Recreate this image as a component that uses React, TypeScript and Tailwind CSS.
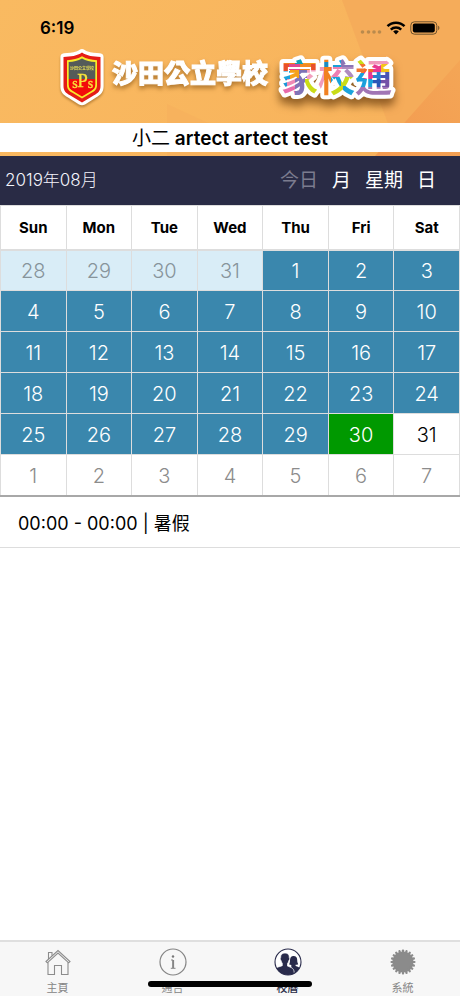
import type { ReactNode } from 'react';
import { clsx } from 'clsx';

type DayKind = 'holiday' | 'outsideHoliday' | 'outside' | 'selected' | 'plain';

const WEEKDAYS = ['Sun', 'Mon', 'Tue', 'Wed', 'Thu', 'Fri', 'Sat'];

const DAY_STYLES: Record<DayKind, string> = {
  holiday: 'bg-[#3a87ad] text-white',
  outsideHoliday: 'bg-[#d9edf7] text-[#87949b]',
  outside: 'bg-white text-[#8c8c8c]',
  selected: 'bg-[#009900] text-white',
  plain: 'bg-white text-black',
};

// August 2019 starts on a Thursday, so the grid opens with 28 July.
const DAYS = Array.from({ length: 42 }, (_, i) => {
  const date = new Date(2019, 6, 28 + i);
  const day = date.getDate();
  let kind: DayKind = 'holiday';
  if (date.getMonth() === 6) kind = 'outsideHoliday';
  else if (date.getMonth() === 8) kind = 'outside';
  else if (day === 30) kind = 'selected';
  else if (day === 31) kind = 'plain';
  return { day, kind };
});

const WEEKS = Array.from({ length: 6 }, (_, i) => DAYS.slice(i * 7, i * 7 + 7));

const VIEWS = ['今日', '月', '星期', '日'];

function StatusBar() {
  return (
    <div className="relative flex items-center justify-between pt-4 pr-5 pl-10">
      <span className="text-[17px] leading-6 font-semibold">6:19</span>
      <div className="flex items-center gap-1">
        <svg width="22" height="14" viewBox="0 0 22 14" aria-hidden>
          {[2.5, 8.5, 14, 19.5].map((cx) => (
            <circle key={cx} cx={cx} cy="11" r="1.8" fill="#b98a4d" />
          ))}
        </svg>
        <svg width="20" height="14" viewBox="0 0 20 14" fill="none" stroke="#000" strokeWidth="2.5" aria-hidden>
          <path d="M1.5 5.2a12 12 0 0 1 17 0" />
          <path d="M4.800 8.600a7.400 7.400 0 0 1 10.400 0" />
          <path d="M10 13.400 7.200 10.500a4.200 4.200 0 0 1 5.600 0z" fill="#000" stroke="none" />
        </svg>
        <svg width="30" height="14" viewBox="0 0 30 14" aria-hidden>
          <rect x=".8" y=".8" width="26" height="12.4" rx="3.6" fill="none" stroke="#6c512c" />
          <rect x="2.8" y="2.6" width="22" height="8.8" rx="1.8" />
          <path d="M28.200 4.800v4.400c1.600-.6 1.600-3.800 0-4.400z" fill="#6c512c" />
        </svg>
      </div>
    </div>
  );
}

function SchoolCrest() {
  return (
    <svg
      width="44"
      height="58"
      viewBox="0 0 44 58"
      className="shrink-0 drop-shadow-[0_2px_1px_rgba(120,70,10,0.45)]"
      role="img"
      aria-label="SPS"
    >
      <path d="M22 1c2 0 2.600 1.500 5 2.200 4.500 1.600 9 1.400 13 2.100 2.600.4 3.600 1.700 3.600 4.200V38c0 6-2.600 8.600-7.600 11.500L25 56.500c-2 1.100-4 1.100-6 0L8 49.500C3 46.600.4 44 .4 38V9.500C.4 7 1.400 5.700 4 5.300c4-.7 8.500-.5 13-2.100C19.400 2.500 20 1 22 1z" fill="#fff" />
      <path d="M22 4.500c5 3.500 11 4 18.500 4.500v29c0 5-2.500 7-6.500 9.300L22 54.500l-12-7.200C6 45 3.500 43 3.500 38V9C11 8.500 17 8 22 4.500z" fill="#e51c17" />
      <path d="M22 8.300c4.500 2.700 9 3.500 15 4V37c0 4-1.800 5.700-5 7.600L22 50.500l-10-5.900c-3.200-1.900-5-3.600-5-7.600V12.300c6-.5 10.500-1.300 15-4z" fill="#f8ea2a" />
      <path d="M22 10.500c4 2.300 8.300 3.200 13.300 3.600V31H8.700V14.100c5-.4 9.300-1.300 13.300-3.600z" fill="#555b59" />
      <path d="M8.700 31h26.600v5.700c0 3.400-1.600 4.700-4.200 6.300L22 48.500 12.900 43c-2.600-1.600-4.200-2.900-4.200-6.300z" fill="#f30b0b" />
      <text x="22" y="21.5" textAnchor="middle" fontSize="4" fontWeight="700" fill="#e8dd55" className="font-['Noto_Sans_CJK_TC',sans-serif]">
        沙田公立學校
      </text>
      <g fill="#f9e43b" stroke="#f9e43b" strokeWidth=".3" className="font-['Liberation_Serif',serif]">
        <text x="15" y="40" fontSize="14" textAnchor="middle">s</text>
        <text x="22.500" y="39" fontSize="19" textAnchor="middle">P</text>
        <text x="30.500" y="40" fontSize="14" textAnchor="middle">s</text>
      </g>
    </svg>
  );
}

// x, y, width, height, colour of each patch behind the wordmark's letters
const PATCHES: [number, number, number, number, string][] = [
  [3, 9, 14, 7, '#f47b20'],
  [17, 6, 8, 10, '#12a0b4'],
  [25, 9, 15, 7, '#f59a1f'],
  [3, 16, 8, 7, '#e9502a'],
  [11, 16, 11, 6, '#e0498f'],
  [22, 16, 11, 6, '#f18a22'],
  [33, 16, 7, 7, '#e9502a'],
  [3, 23, 9, 8, '#1ba3dc'],
  [12, 22, 9, 9, '#f5a21b'],
  [21, 22, 8, 8, '#7c72b6'],
  [29, 22, 11, 9, '#f3a0bf'],
  [3, 31, 6, 8, '#1b96d8'],
  [9, 31, 8, 8, '#ef8ab5'],
  [17, 30, 10, 18, '#8174b7'],
  [27, 31, 13, 17, '#cbdc17'],
  [3, 39, 14, 9, '#e86bab'],
  [40, 6, 6, 42, '#f09abb'],
  [46, 6, 7, 42, '#f18122'],
  [40, 14, 13, 5, '#1c8cc4'],
  [53, 6, 10, 13, '#1aa0d8'],
  [63, 6, 14, 13, '#8b75b5'],
  [53, 19, 11, 10, '#ee7fb2'],
  [64, 19, 13, 10, '#b08cc0'],
  [53, 29, 10, 9, '#1aa0d8'],
  [63, 29, 14, 9, '#c9dc18'],
  [53, 38, 12, 10, '#c9dc18'],
  [65, 38, 12, 10, '#1ba3dc'],
  [77, 6, 9, 10, '#c9dc18'],
  [77, 16, 9, 9, '#f3762c'],
  [77, 25, 9, 14, '#1b9edc'],
  [77, 39, 37, 9, '#a176b5'],
  [86, 6, 28, 10, '#f09abb'],
  [86, 16, 9, 8, '#f3692a'],
  [95, 16, 8, 8, '#e83991'],
  [103, 16, 11, 8, '#f5c21b'],
  [86, 24, 9, 7, '#e83991'],
  [95, 24, 8, 7, '#2a7fd0'],
  [103, 24, 11, 7, '#4b55b5'],
  [86, 31, 9, 8, '#1ba3dc'],
  [95, 31, 8, 8, '#2a57b8'],
  [103, 31, 11, 8, '#7452a8'],
];

function AppWordmark() {
  return (
    <svg
      width="118"
      height="60"
      viewBox="0 0 118 60"
      className="shrink-0 drop-shadow-[0_7px_4px_rgba(80,40,0,0.6)]"
    >
      <defs>
        <pattern id="patchwork" width="118" height="60" patternUnits="userSpaceOnUse">
          {PATCHES.map(([x, y, w, h, fill]) => (
            <rect key={`${x}-${y}`} x={x} y={y} width={w} height={h} fill={fill} />
          ))}
        </pattern>
      </defs>
      <text
        x="3"
        y="44"
        fontSize="37"
        fontWeight="700"
        fill="url(#patchwork)"
        stroke="#fff"
        strokeWidth="8"
        strokeLinejoin="round"
        className="font-['Noto_Sans_CJK_TC',sans-serif] [paint-order:stroke]"
      >
        家校通
      </text>
    </svg>
  );
}

function Banner() {
  return (
    <header className="relative overflow-hidden bg-[#f9b95f]">
      <svg
        className="absolute inset-0 h-full w-full"
        viewBox="0 0 460 156"
        preserveAspectRatio="none"
        aria-hidden
      >
        <defs>
          <linearGradient id="glow" x1="0" y1="0" x2="1" y2="0.3">
            <stop offset="0" stopColor="#f9ba61" />
            <stop offset="1" stopColor="#f8b35c" />
          </linearGradient>
          <linearGradient id="corner" x1="0" y1="1" x2="1" y2="0">
            <stop offset="0" stopColor="#f39a50" />
            <stop offset="1" stopColor="#f4a656" />
          </linearGradient>
        </defs>
        <rect width="460" height="156" fill="url(#glow)" />
        <path d="M167 156V104L280 156z" fill="#f7b25d" />
        <path d="M342 0H460V156H400z" fill="#f5ac5a" />
        <path d="M460 60V156H375z" fill="url(#corner)" />
      </svg>
      <StatusBar />
      <div className="relative flex h-[83px] items-start justify-center pt-2 pr-1">
        <SchoolCrest />
        <h1 className="mt-2 ml-2 text-[26px] leading-9 font-black whitespace-nowrap text-white drop-shadow-[0_3px_2px_rgba(110,60,0,0.5)] [-webkit-text-stroke:1px_white]">
          沙田公立學校
        </h1>
        <div className="ml-2.5">
          <AppWordmark />
        </div>
      </div>
      <div className="relative mb-1 bg-white pt-0.5 text-center text-[19px] leading-[27px] font-semibold">
        <span className="font-normal">小二</span> artect artect test
      </div>
    </header>
  );
}

function Calendar() {
  return (
    <section>
      <div className="flex h-[49px] items-center justify-between bg-[#292b45] pr-6 pl-[5px] text-white">
        <h2 className="text-[17px] font-light text-[#f4f4fc]">2019年08月</h2>
        <div className="flex gap-3.5 pt-0.5 text-[19px]">
          {VIEWS.map((view, i) => (
            <button key={view} type="button" className={clsx(i === 0 && 'text-[#7b7c8f]')}>
              {view}
            </button>
          ))}
        </div>
      </div>
      <table className="w-full table-fixed border-collapse">
        <thead>
          <tr className="h-11">
            {WEEKDAYS.map((name) => (
              <th key={name} scope="col" className="border border-b-2 border-[#dddddd] p-0 pt-0.5 text-[15px] font-bold">
                {name}
              </th>
            ))}
          </tr>
        </thead>
        <tbody>
          {WEEKS.map((week, w) => (
            <tr key={w} className="h-[41px]">
              {week.map(({ day, kind }) => (
                <td
                  key={day}
                  className={clsx(
                    'border border-t-[#dddddd] border-r-[#dddddd] border-l-[#dddddd] p-0',
                    w < 5 ? 'border-b-[#dddddd]' : 'border-b-2 border-b-[#a8a8a8]',
                    DAY_STYLES[kind],
                  )}
                >
                  <button type="button" className="block w-full pt-0.5 text-center text-[20px] leading-8 font-light">
                    {day}
                  </button>
                </td>
              ))}
            </tr>
          ))}
        </tbody>
      </table>
    </section>
  );
}

function HomeIcon() {
  return (
    <svg width="28" height="28" viewBox="0 0 28 28" fill="none" stroke="#8c8c8c" strokeWidth="1.1" aria-hidden>
      <path d="M2 13.500 14 2.500l12 11-1.300 1.300L14 5 3.300 14.800z" />
      <path d="M4 14.200V26.500h6.500v-9h7v9H24V14.200" />
      <path d="M4.500 11V4.500h3.500v3.300" />
    </svg>
  );
}

function InfoIcon() {
  return (
    <svg width="28" height="28" viewBox="0 0 28 28" fill="none" stroke="#858585" strokeWidth="1.2" aria-hidden>
      <circle cx="14" cy="14" r="13" />
      <circle cx="14" cy="8.5" r="1.2" fill="#777" stroke="none" />
      <path d="M12 12h2v8M11.800 20.300h4.700" strokeWidth="1" />
      <path d="M14.200 12v8" strokeWidth="1.8" />
    </svg>
  );
}

function PeopleIcon() {
  return (
    <svg width="28" height="28" viewBox="0 0 28 28" aria-hidden>
      <defs>
        <clipPath id="people-circle">
          <circle cx="14" cy="14" r="13" />
        </clipPath>
      </defs>
      <circle cx="14" cy="14" r="13" fill="#fff" />
      <g clipPath="url(#people-circle)" fill="#292b4b">
        <path d="M19.500 8c2.600 0 3.800 1.700 3.700 4.200 0 1.900.5 2.700 1 4-1 .6-1.800.7-2.600.6v1.300c2.400.8 4.600 1.600 5.700 3.200V28h-10V17c-.9 0-1.500-.2-2.300-.7.9-1.300.9-2.200 1-4.100C16 9.700 17 8 19.500 8z" />
        <path d="M11 5c3 0 4.500 1.900 4.300 4.800.6.400.4 2-.4 2.700-.2 1.300-.8 2.200-1.400 2.900v2.700c3.600 1.400 6.400 1.700 6.700 6.300L20 28H0v-7c2-1.600 5-2.100 8.300-3.300v-2.400c-.6-.7-1.100-1.600-1.300-2.800-.8-.6-1-2.300-.4-2.700C6.400 6.900 8 5 11 5z" stroke="#fff" strokeWidth=".7" />
      </g>
      <circle cx="14" cy="14" r="13" fill="none" stroke="#292b4b" strokeWidth="1.1" />
    </svg>
  );
}

function GearIcon() {
  return (
    <svg width="28" height="28" viewBox="0 0 28 28" fill="#8b8b8b" aria-hidden>
      <circle cx="14" cy="14" r="10.6" />
      {Array.from({ length: 20 }, (_, i) => (
        <rect
          key={i}
          x="12.9"
          y="1.5"
          width="2.2"
          height="4"
          rx=".8"
          transform={`rotate(${i * 18} 14 14)`}
        />
      ))}
    </svg>
  );
}

const TABS: { label: string; icon: ReactNode; active?: boolean }[] = [
  { label: '主頁', icon: <HomeIcon /> },
  { label: '通告', icon: <InfoIcon /> },
  { label: '校曆', icon: <PeopleIcon />, active: true },
  { label: '系統', icon: <GearIcon /> },
];

function TabBar() {
  return (
    <nav className="relative grid grid-cols-4 border-t-2 border-[#dfdfdf] bg-[#f7f7f7]">
      {TABS.map(({ label, icon, active }) => (
        <a
          key={label}
          href="#"
          aria-current={active ? 'page' : undefined}
          className={clsx(
            'flex flex-col items-center gap-1 pt-1.5 text-[11px] leading-4',
            active ? 'font-medium text-[#292b45]' : 'text-[#858585]',
          )}
        >
          {icon}
          {label}
        </a>
      ))}
      {/* home indicator */}
      <div className="pointer-events-none absolute bottom-[9px] left-1/2 h-[6px] w-[164px] -translate-x-1/2 rounded-full bg-black" />
    </nav>
  );
}

export default function App() {
  return (
    <div className="flex min-h-screen flex-col bg-white font-['Inter','Noto_Sans_CJK_TC',sans-serif] text-black">
      <Banner />
      <main className="flex-1">
        <Calendar />
        <ul>
          <li className="border-b border-[#dddddd] px-[18px] pt-3.5 pb-2.5 text-[18px] leading-[26px]">
            00:00 - 00:00 | 暑假
          </li>
        </ul>
      </main>
      <TabBar />
    </div>
  );
}
